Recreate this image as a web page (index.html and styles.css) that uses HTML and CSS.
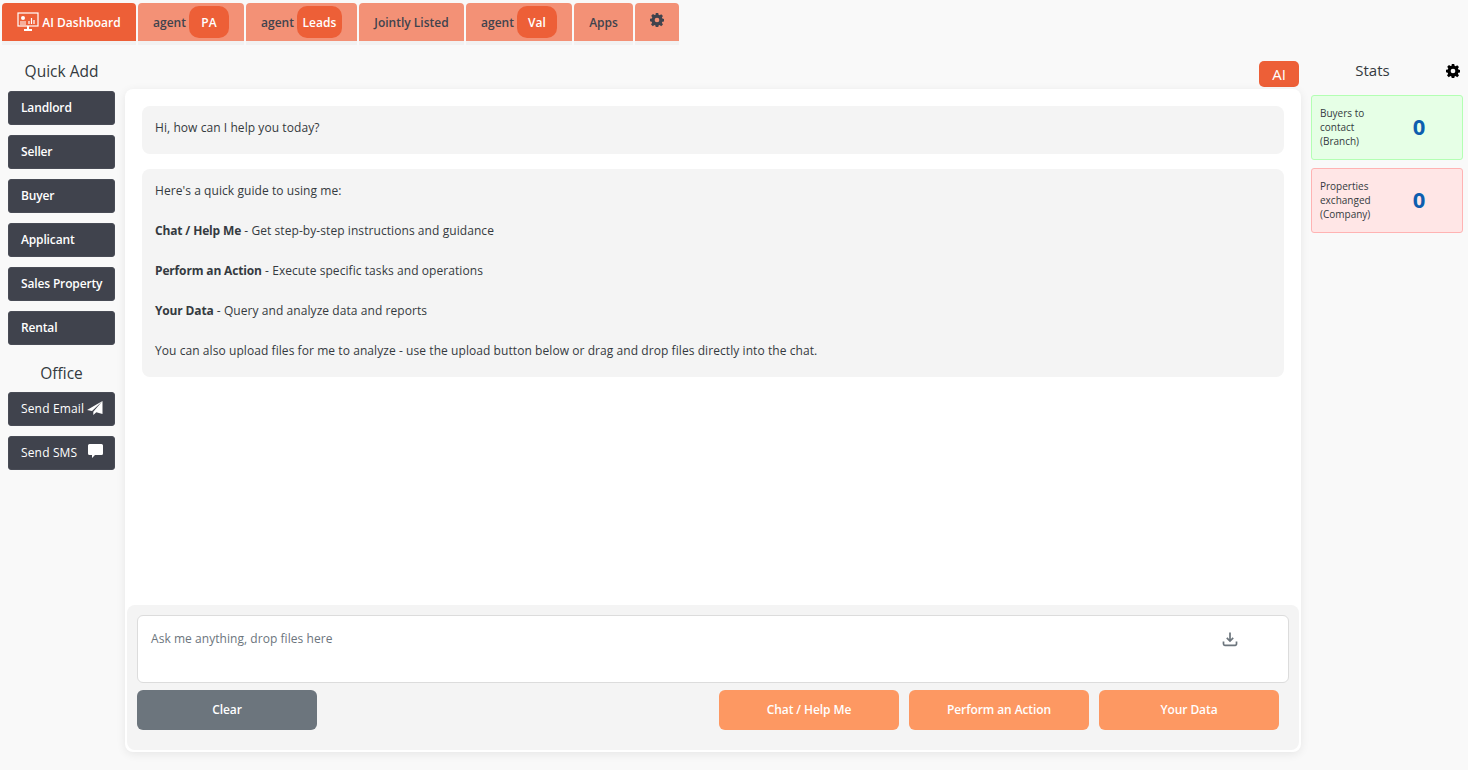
FILE: index.html
```html
<!DOCTYPE html>
<html lang="en">
<head>
<meta charset="utf-8">
<title>AI Dashboard</title>
<link rel="stylesheet" href="styles.css">
</head>
<body>
<nav class="tabs">
  <a class="tab tab-active tab-dash">
    <svg class="dash-icon" viewBox="0 0 22 20" width="22" height="20" fill="none" stroke="#fff"><rect x="1" y="1" width="20" height="13" stroke-width="1.2"/><circle cx="6" cy="6" r="2" fill="#fff" stroke="none"/><path d="M3 10h6M3 12h6" stroke-width="1"/><path d="M12 12V9M14.5 12V6M17 12V8" stroke-width="1.2"/><path d="M11 14v3M7 18h8" stroke-width="2"/></svg>
    AI Dashboard
  </a>
  <a class="tab tab-pa">agent <span class="pill pill-pa">PA</span></a>
  <a class="tab tab-leads">agent <span class="pill pill-leads">Leads</span></a>
  <a class="tab tab-joint">Jointly Listed</a>
  <a class="tab tab-val">agent <span class="pill pill-pa">Val</span></a>
  <a class="tab tab-apps">Apps</a>
  <a class="tab tab-gear">
    <svg viewBox="0 0 16 16" width="14" height="14"><path class="gear-dark" fill-rule="evenodd" d="M6.6 0h2.800l.4 2.100 1.200.5L12.800 1.400l2 2-1.200 1.800.5 1.200 2.100.4v2.800l-2.100.4-.5 1.200 1.200 1.800-2 2-1.800-1.200-1.200.5-.4 2.100H6.600l-.4-2.100-1.200-.5-1.800 1.200-2-2 1.200-1.800-.5-1.200L0 9.400V6.600l2.100-.4.5-1.200L1.400 3.200l2-2 1.800 1.200 1.200-.5zM8 5.300a2.700 2.700 0 1 0 0 5.400 2.700 2.700 0 0 0 0-5.400z"/></svg>
  </a>
</nav>

<main class="layout">
  <aside class="left">
    <h2 class="side-title">Quick Add</h2>
    <button class="side-btn">Landlord</button>
    <button class="side-btn">Seller</button>
    <button class="side-btn">Buyer</button>
    <button class="side-btn">Applicant</button>
    <button class="side-btn">Sales Property</button>
    <button class="side-btn">Rental</button>
    <h2 class="side-title side-title-office">Office</h2>
    <button class="side-btn side-btn-icon">Send Email
      <svg viewBox="0 0 16 14" width="16" height="14" fill="#fff"><path d="M15.500 0 0 9l5 1zM15.500 0 6.300 10.800V14l3-2.700 6.200 1.700z"/></svg>
    </button>
    <button class="side-btn side-btn-icon">Send SMS
      <svg class="sms-icon" viewBox="0 0 15 14" width="15" height="14" fill="#fff"><path d="M1.500 0h12A1.500 1.500 0 0 1 15 1.500v8a1.500 1.500 0 0 1-1.500 1.500H7l-3 3v-3H1.500A1.500 1.500 0 0 1 0 9.500v-8A1.500 1.500 0 0 1 1.500 0z"/></svg>
    </button>
  </aside>

  <section class="center">
    <div class="ai-row"><span class="ai-badge">AI</span></div>
    <div class="chat-card">
      <div class="messages">
        <div class="msg">Hi, how can I help you today?</div>
        <div class="msg msg-guide">
          <p>Here's a quick guide to using me:</p>
          <p><b>Chat / Help Me</b> - Get step-by-step instructions and guidance</p>
          <p><b>Perform an Action</b> - Execute specific tasks and operations</p>
          <p><b>Your Data</b> - Query and analyze data and reports</p>
          <p>You can also upload files for me to analyze - use the upload button below or drag and drop files directly into the chat.</p>
        </div>
      </div>
      <div class="composer">
        <div class="input-box">
          <span class="placeholder">Ask me anything, drop files here</span>
          <svg class="upload" viewBox="0 0 16 16" width="16" height="16" fill="none" stroke="#6c757d" stroke-width="1.700"><path d="M8 1.500v8M4.800 6.800 8 10l3.200-3.200"/><path d="M1.500 10.500v2.500a1.300 1.300 0 0 0 1.300 1.300h10.400a1.300 1.300 0 0 0 1.300-1.300v-2.500"/></svg>
        </div>
        <div class="actions">
          <button class="act act-clear">Clear</button>
          <div class="act-group">
            <button class="act act-orange">Chat / Help Me</button>
            <button class="act act-orange">Perform an Action</button>
            <button class="act act-orange">Your Data</button>
          </div>
        </div>
      </div>
    </div>
  </section>

  <aside class="right">
    <div class="stats-head">
      <span class="stats-title">Stats</span>
      <svg class="stats-gear" viewBox="0 0 16 16" width="14" height="14"><path fill-rule="evenodd" d="M6.600 0h2.800l.4 2.100 1.200.5L12.800 1.400l2 2-1.200 1.800.5 1.200 2.100.4v2.800l-2.100.4-.5 1.200 1.200 1.800-2 2-1.800-1.200-1.200.5-.4 2.100H6.600l-.4-2.100-1.200-.5-1.800 1.200-2-2 1.200-1.800-.5-1.200L0 9.400V6.600l2.100-.4.5-1.200L1.400 3.200l2-2 1.800 1.200 1.200-.5zM8 5.300a2.700 2.700 0 1 0 0 5.400 2.700 2.700 0 0 0 0-5.400z"/></svg>
    </div>
    <div class="stat stat-green"><span class="stat-label">Buyers to contact (Branch)</span><span class="stat-num">0</span></div>
    <div class="stat stat-red"><span class="stat-label">Properties exchanged (Company)</span><span class="stat-num">0</span></div>
  </aside>
</main>
</body>
</html>
```

FILE: styles.css
```css
* { box-sizing: border-box; }
html, body { height: 100%; }
body {
  margin: 0;
  background: #f9f9f9;
  font-family: "Open Sans", "Noto Sans", sans-serif;
  font-size: 12px;
  color: #343a40;
  overflow: hidden;
}
.tabs {
  display: flex;
  gap: 2px;
  padding: 3px 0 0 2px;
  height: 45px;
}
.tab {
  height: 42px;
  padding-bottom: 4px;
  display: flex;
  align-items: center;
  justify-content: center;
  gap: 3px;
  background: #f39176;
  color: #40434d;
  font-weight: 600;
  font-size: 12px;
  border-radius: 4px 4px 0 0;
  box-shadow: inset 0 -4px 0 #f2f2f2;
}
.tab-active { background: #ed5f37; color: #fff; }
.tab-dash { width: 134px; }
.tab-pa { width: 106px; }
.tab-leads { width: 111px; }
.tab-joint { width: 105px; }
.tab-val { width: 106px; }
.tab-apps { width: 59px; }
.tab-gear { width: 44px; padding-bottom: 8px; }
.gear-dark { fill: #40434d; }
.pill {
  height: 32px;
  border-radius: 10px;
  background: #ed5f37;
  color: #fff;
  display: flex;
  align-items: center;
  justify-content: center;
}
.pill-pa { width: 40px; }
.pill-leads { width: 45px; }
.layout {
  display: flex;
  padding: 0 5px 0 8px;
  height: 725px;
}
.left { width: 107px; flex: none; }
.side-title {
  margin: 0;
  height: 46px;
  padding-top: 16px;
  text-align: center;
  font-weight: 400;
  font-size: 15.500px;
  line-height: 20px;
  color: #343a40;
}
.side-title-office { height: 37px; padding-top: 8px; }
.side-btn {
  display: flex;
  align-items: center;
  width: 107px;
  height: 34px;
  margin-bottom: 10px;
  padding: 0 12px 2px;
  background: #40434d;
  border: 1px solid #494c56;
  border-radius: 3px;
  color: #fff;
  font: 600 12px "Open Sans", sans-serif;
  letter-spacing: -0.15px;
  text-align: left;
  white-space: nowrap;
}
.side-btn-icon {
  font-weight: 500;
  letter-spacing: 0.15px;
  justify-content: space-between;
  padding-right: 11px;
}
.sms-icon { margin-top: -3px; }
.center {
  width: 1176px;
  margin-left: 10px;
  flex: none;
  display: flex;
  flex-direction: column;
}
.ai-row {
  height: 44px;
  display: flex;
  justify-content: flex-end;
  align-items: flex-end;
  padding: 0 2px 2px 0;
}
.ai-badge {
  width: 40px;
  height: 26px;
  border-radius: 5px;
  background: #ed5f37;
  color: #fff;
  font-size: 15px;
  display: flex;
  align-items: center;
  justify-content: center;
}
.chat-card {
  height: 663px;
  background: #fff;
  border-radius: 8px;
  box-shadow: 0 2px 10px rgba(0,0,0,0.08);
  display: flex;
  flex-direction: column;
  padding: 0 2px 2px;
}
.messages {
  flex: 1;
  padding: 17px 15px 0;
}
.msg {
  background: #f4f4f4;
  border-radius: 8px;
  padding: 12px 13px 16px;
  line-height: 20px;
  margin-bottom: 15px;
  font-size: 12px;
  letter-spacing: 0.07px;
  color: #343a40;
}
.msg-guide { height: 208px; }
.msg b { letter-spacing: -0.15px; }
.msg p { margin: 0 0 20px; }
.msg p:last-child { margin-bottom: 0; }
.composer {
  height: 145px;
  background: #f4f4f4;
  border-radius: 8px;
  padding: 10px;
}
.input-box {
  position: relative;
  height: 68px;
  background: #fff;
  border: 1px solid #dcdcdc;
  border-radius: 6px;
  padding: 14px 13px;
}
.placeholder { color: #6c757d; letter-spacing: 0.05px; }
.upload { position: absolute; right: 50px; top: 15px; }
.actions {
  display: flex;
  justify-content: space-between;
  margin-top: 7px;
  padding-right: 10px;
}
.act-group { display: flex; gap: 10px; }
.act {
  width: 180px;
  height: 40px;
  border: 0;
  border-radius: 6px;
  padding: 0 0 2px;
  color: #fff;
  font: 600 12px "Open Sans", sans-serif;
  letter-spacing: -0.08px;
}
.act-clear { background: #6c757d; }
.act-orange { background: #fd9862; }
.right { width: 152px; margin-left: 10px; flex: none; }
.stats-head {
  height: 50px;
  position: relative;
  text-align: center;
  padding-top: 15px;
  font-size: 15px;
  line-height: 20px;
  padding-right: 29px;
}
.stats-gear { position: absolute; right: 3px; top: 19px; }
.stat {
  height: 65px;
  margin-bottom: 8px;
  border-radius: 3px;
  display: flex;
  align-items: center;
  padding-left: 8px;
  font-size: 10px;
  line-height: 14px;
}
.stat-green { background: #e6ffe6; border: 1px solid #b3ffb3; }
.stat-red { background: #ffe6e6; border: 1px solid #ffb3b3; }
.stat-label { width: 62px; padding-bottom: 2px; }
.stat-num {
  flex: 1;
  text-align: center;
  font-size: 22px;
  line-height: 26px;
  font-weight: 700;
  color: #0d5eaf;
  padding: 0 6px 4px 0;
}
```
